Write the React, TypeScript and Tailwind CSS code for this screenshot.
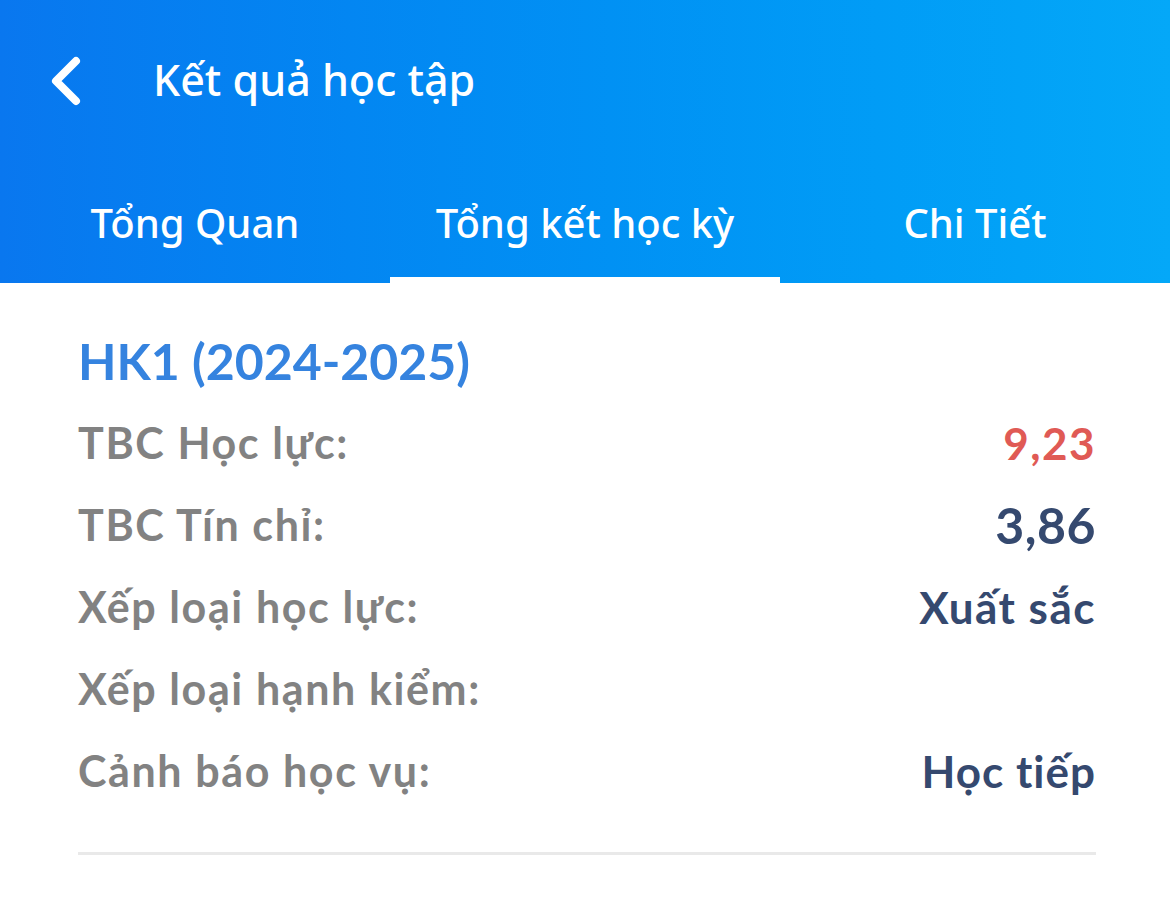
const rows = [
  { label: 'TBC Học lực:', value: '9,23', cls: 'text-[#e05a55] text-[44px] tracking-[1.5px]' },
  { label: 'TBC Tín chỉ:', value: '3,86', cls: 'text-[#35496f] text-[50px] tracking-[0.5px]' },
  { label: 'Xếp loại học lực:', value: 'Xuất sắc', cls: 'text-[#35496f] text-[44px] tracking-[1.5px]' },
  { label: 'Xếp loại hạnh kiểm:', value: '', cls: 'text-[#35496f] text-[44px]' },
  { label: 'Cảnh báo học vụ:', value: 'Học tiếp', cls: 'text-[#35496f] text-[44px] tracking-[1px]' },
]

const tabs = ['Tổng Quan', 'Tổng kết học kỳ', 'Chi Tiết']

export default function App() {
  const active = 1
  return (
    <div className="min-h-screen bg-white">
      <div className="h-[283px] flex flex-col bg-linear-to-r from-[#0977ef] to-[#04a8f8] font-['Noto_Sans',sans-serif] text-white">
        <div className="h-[162px] flex items-center">
          <svg width="40" height="52" viewBox="0 0 40 52" className="ml-[46px]">
            <path d="M30 6 L10 26 L30 46" fill="none" stroke="white" strokeWidth="8" strokeLinecap="round" strokeLinejoin="round" />
          </svg>
          <h1 className="ml-[67px] text-[43px] font-medium leading-none pb-1">Kết quả học tập</h1>
        </div>
        <div className="flex-1 grid grid-cols-3">
          {tabs.map((t, i) => (
            <div key={t} className="relative flex items-center justify-center">
              <span className="text-[40px] font-medium">{t}</span>
              {i === active && <div className="absolute bottom-0 left-0 right-0 h-[6px] bg-white" />}
            </div>
          ))}
        </div>
      </div>

      <div className="pl-[78px] pr-[74px] font-['Lato',sans-serif] font-bold">
        <div className="mt-[48px] text-[50px] leading-[60px] text-[#3583df]">HK1 (2024-2025)</div>
        <div className="mt-[11px]">
          {rows.map((r) => (
            <div key={r.label} className="h-[82px] flex items-center justify-between">
              <span className="text-[43px] text-[#828282] tracking-[1.6px]">{r.label}</span>
              <span className={r.cls}>{r.value}</span>
            </div>
          ))}
        </div>
        <div className="mt-[40px] h-[3px] bg-[#e9e9e9]" />
      </div>
    </div>
  )
}
